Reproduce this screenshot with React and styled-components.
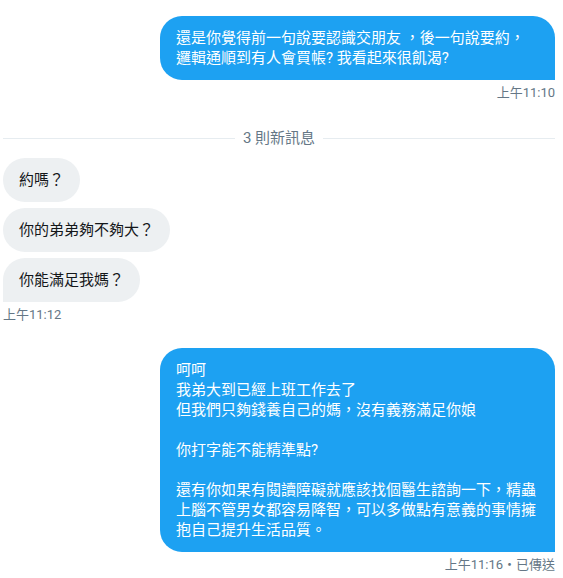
import React from "react";
import styled, { createGlobalStyle } from "styled-components";

const colors = {
  blue: "#1da1f2",
  gray: "#edf0f2",
  text: "#14171a",
  muted: "#657786",
  line: "#e6ecf0",
};

const font = `"Segoe UI", Roboto, "Noto Sans CJK TC", "Noto Sans", sans-serif`;

const Global = createGlobalStyle`
  body {
    margin: 0;
    background: #fff;
    font-family: ${font};
  }
`;

const Page = styled.div`
  width: 563px;
  box-sizing: border-box;
  padding: 16px 8px 0 3px;
  display: flex;
  flex-direction: column;
`;

const Group = styled.div`
  display: flex;
  flex-direction: column;
  align-items: ${(p) => (p.sent ? "flex-end" : "flex-start")};
  gap: 6px;
  margin-top: ${(p) => p.top || 0}px;
`;

const Bubble = styled.div`
  box-sizing: border-box;
  max-width: 395px;
  padding: 12px 16px;
  font-size: 15px;
  line-height: 20px;
  white-space: pre-line;
  word-break: break-all;
  color: ${(p) => (p.sent ? "#fff" : colors.text)};
  background: ${(p) => (p.sent ? colors.blue : colors.gray)};
  border-radius: 22px;
  ${(p) => p.sent && p.last && "border-bottom-right-radius: 0;"}
  ${(p) => !p.sent && p.last && "border-bottom-left-radius: 0;"}
`;

const Time = styled.div`
  margin-top: -1px;
  font-size: 13px;
  line-height: 16px;
  color: ${colors.muted};
`;

const Divider = styled.div`
  display: flex;
  align-items: center;
  gap: 8px;
  margin: 27px 0 10px;
  font-size: 15px;
  line-height: 20px;
  color: ${colors.muted};

  &::before,
  &::after {
    content: "";
    flex: 1;
    height: 1px;
    background: ${colors.line};
  }
`;

const reply = `呵呵
我弟大到已經上班工作去了
但我們只夠錢養自己的媽，沒有義務滿足你娘

你打字能不能精準點?

還有你如果有閱讀障礙就應該找個醫生諮詢一下，精蟲上腦不管男女都容易降智，可以多做點有意義的事情擁抱自己提升生活品質。`;

export default function App() {
  return (
    <>
      <Global />
      <Page>
        <Group sent>
          <Bubble sent last>
            還是你覺得前一句說要認識交朋友 ，後一句說要約，邏輯通順到有人會買帳? 我看起來很飢渴?
          </Bubble>
          <Time>上午11:10</Time>
        </Group>

        <Divider>3 則新訊息</Divider>

        <Group>
          <Bubble>約嗎？</Bubble>
          <Bubble>你的弟弟夠不夠大？</Bubble>
          <Bubble last>你能滿足我媽？</Bubble>
          <Time>上午11:12</Time>
        </Group>

        <Group sent top={25}>
          <Bubble sent last>{reply}</Bubble>
          <Time>上午11:16・已傳送</Time>
        </Group>
      </Page>
    </>
  );
}
